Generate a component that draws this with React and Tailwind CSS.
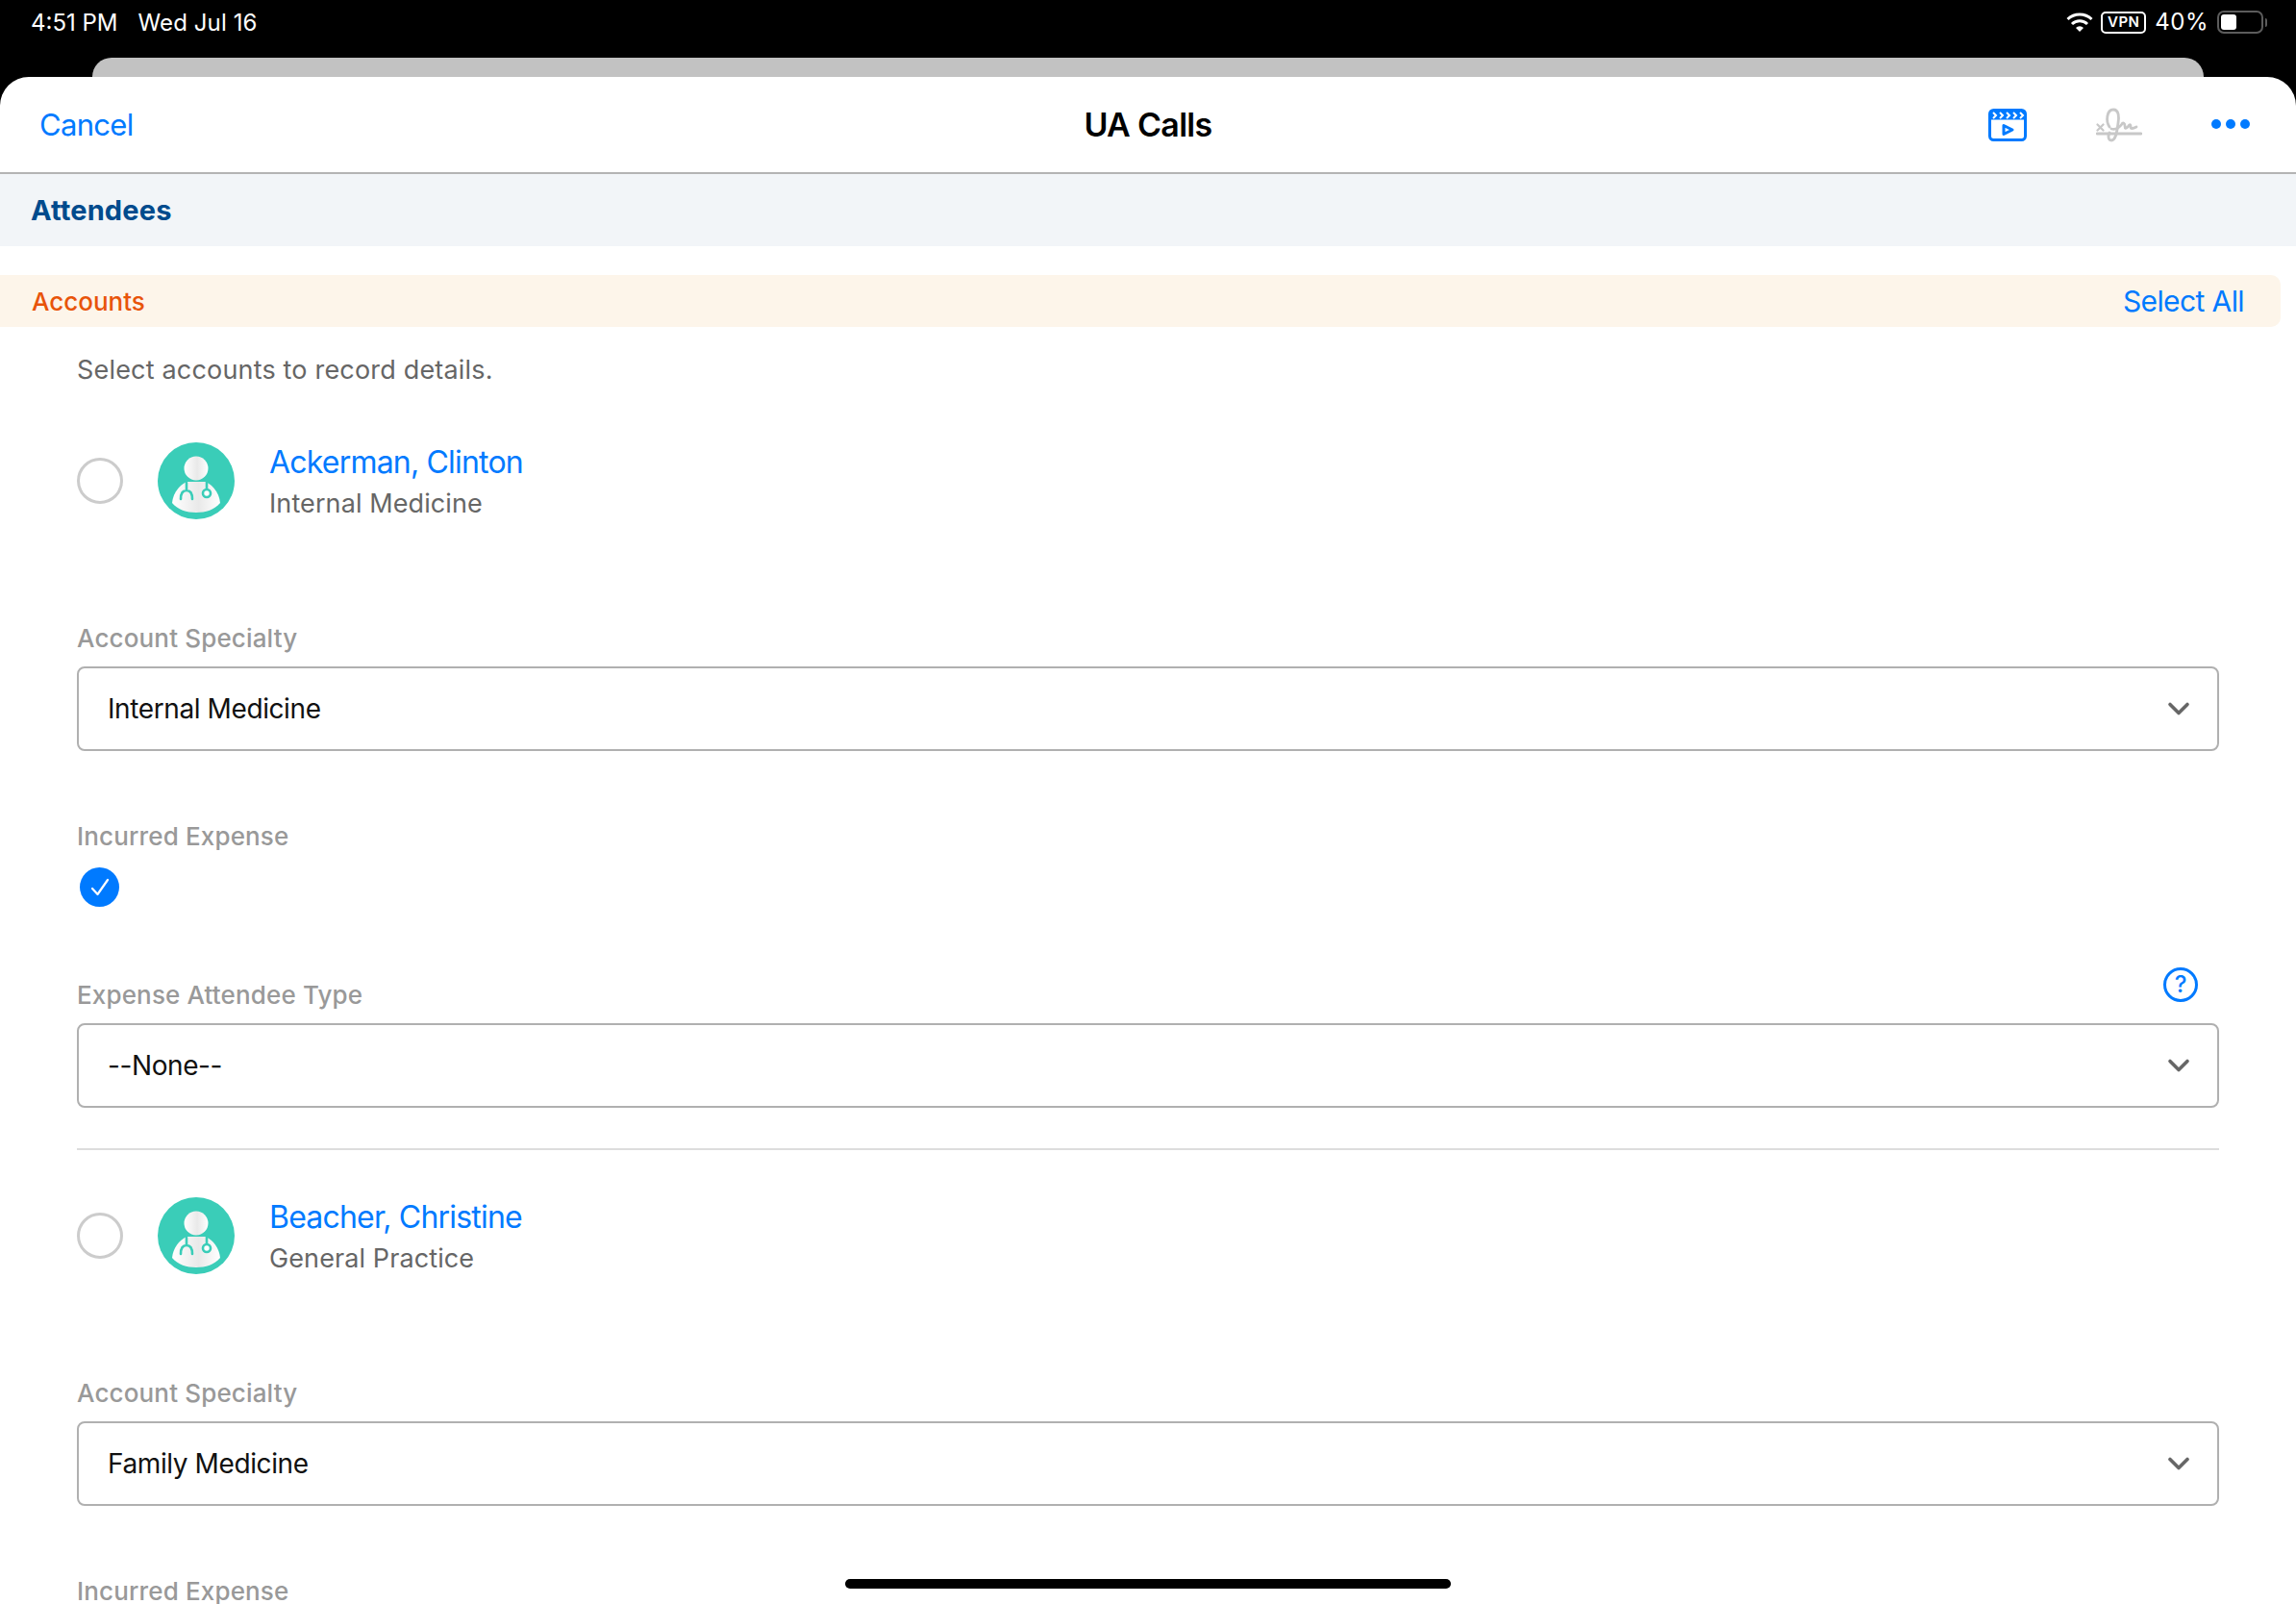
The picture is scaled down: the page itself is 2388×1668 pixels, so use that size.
import { ChevronDown } from "lucide-react";

const font = { fontFamily: "Inter, 'Noto Sans', sans-serif" };

function Avatar() {
  return (
    <svg width="80" height="80" viewBox="0 0 80 80" className="shrink-0">
      <defs>
        <linearGradient id="doc" x1="0" x2="1" y1="0" y2="0">
          <stop offset="0" stopColor="#ffffff" />
          <stop offset="0.55" stopColor="#e9e9e9" />
          <stop offset="1" stopColor="#ffffff" />
        </linearGradient>
      </defs>
      <circle cx="40" cy="40" r="40" fill="#3acdb8" />
      <circle cx="40" cy="27" r="12.500" fill="url(#doc)" />
      <path d="M15 63c1-10 7-18 15-22h20c8 4 14 12 15 22-6 7-15 10-25 10s-19-3-25-10z" fill="url(#doc)" />
      <path d="M30 42v8c-4 0-6 3-6 9M30 50c4 0 6 3 6 9" fill="none" stroke="#3acdb8" strokeWidth="2.600" strokeLinecap="round" />
      <path d="M51 41v8" fill="none" stroke="#3acdb8" strokeWidth="2.600" />
      <circle cx="51" cy="53" r="4" fill="#ffffff" stroke="#3acdb8" strokeWidth="2.600" />
    </svg>
  );
}

function Radio() {
  return <div className="w-[48px] h-[48px] rounded-full border-[3px] border-[#cccccc] shrink-0" />;
}

function AccountRow({ name, specialty }) {
  return (
    <div className="flex items-center h-[80px]">
      <Radio />
      <div className="ml-[36px]">
        <Avatar />
      </div>
      <div className="ml-[36px] mt-[1px]">
        <div className="text-[32px] leading-[40px] text-[#007aff] tracking-[-0.8px]">{name}</div>
        <div className="text-[27px] leading-[34px] mt-[6px] text-[#666666] tracking-[0.1px]">{specialty}</div>
      </div>
    </div>
  );
}

function Label({ children }) {
  return <div className="text-[26px] leading-[32px] font-medium text-[#999999] tracking-[0.15px]">{children}</div>;
}

function Select({ value }) {
  return (
    <div className="h-[88px] rounded-[8px] border-2 border-[#b0b0b0] flex items-center justify-between pl-[30px] pr-[22px]">
      <span className="text-[28px] text-[#111111] tracking-[-0.4px]">{value}</span>
      <ChevronDown size={36} strokeWidth={2.4} className="text-[#666666]" />
    </div>
  );
}

function VideoIcon() {
  return (
    <svg width="40" height="34" viewBox="0 0 40 34" fill="none" stroke="#007aff">
      <rect x="1.500" y="1.500" width="37" height="31" rx="4" strokeWidth="3" />
      <path d="M2 7h36" strokeWidth="9" />
      <path d="M5 4l3 3-3 3M12 4l3 3-3 3M19 4l3 3-3 3M26 4l3 3-3 3M33 4l3 3-3 3" stroke="#ffffff" strokeWidth="2" />
      <path d="M16 17.500v9l9-4.500z" strokeWidth="3" strokeLinejoin="round" />
    </svg>
  );
}

function SignatureIcon() {
  return (
    <svg width="48" height="36" viewBox="0 0 48 36" fill="none" stroke="#c8c8c8" strokeWidth="2.800" strokeLinecap="round">
      <path d="M1.500 17.500l6 6M7.500 17.500l-6 6" strokeWidth="2.200" />
      <path d="M1 27h46" />
      <path d="M14 20C10 14 11 2 18 2c6 0 6 8 5 14-1 7-2 18-7 18-3 0-4-4-2-8" />
      <path d="M16 22c4 1 8-1 11-5 1-2 3-1 3 2 0 3 1 3 3 1 2-3 3-3 3 0 0 2 2 2 6 0" />
    </svg>
  );
}

function StatusIcons() {
  return (
    <div className="flex items-center">
      <svg width="28" height="22" viewBox="0 0 28 22" fill="none" stroke="#ffffff" strokeWidth="3">
        <path d="M1.500 8a18 18 0 0 1 25 0" />
        <path d="M6 13a11.500 11.500 0 0 1 16 0" />
        <path d="M14 21l-4-4a5.500 5.500 0 0 1 8 0z" fill="#ffffff" stroke="none" />
      </svg>
      <div className="ml-[8px] w-[47px] h-[23px] border-2 border-white rounded-[5px] flex items-center justify-center text-[15px] font-semibold text-white tracking-[0.5px]">
        VPN
      </div>
      <span className="ml-[9px] text-[24px] text-white tracking-[0.5px]">40%</span>
      <div className="ml-[9px] w-[48px] h-[24px] border-2 border-[#5c5c5c] rounded-[7px] p-[2px]">
        <div className="w-[16px] h-full bg-white rounded-[3px]" />
      </div>
      <div className="ml-[2px] w-[2px] h-[9px] bg-[#5c5c5c] rounded-r" />
    </div>
  );
}

export default function App() {
  return (
    <div className="relative w-[2388px] h-[1668px] overflow-hidden bg-black" style={font}>
      {/* status bar */}
      <div className="h-[60px] flex justify-between pl-[32px] pr-[30px] pt-[7px] text-white text-[24px]">
        <div className="flex gap-[21px] h-[34px] items-center">
          <span>4:51 PM</span>
          <span className="tracking-[0.1px]">Wed Jul 16</span>
        </div>
        <div className="h-[34px] flex items-center -mt-[1px]">
          <StatusIcons />
        </div>
      </div>
      <div className="h-[20px] mx-[96px] bg-[#c2c2c2] rounded-t-[22px]" />

      {/* sheet */}
      <div className="bg-white rounded-t-[30px] h-[1588px]">
        <div className="relative h-[101px] border-b-2 border-[#b4b4b4] flex items-center justify-between pl-[41px] pr-[48px]">
          <span className="text-[31px] text-[#007aff] tracking-[-0.7px] mt-[2px]">Cancel</span>
          <span className="text-[34px] font-semibold text-black absolute left-0 right-0 text-center tracking-[-0.7px]">UA Calls</span>
          <div className="flex items-center relative">
            <VideoIcon />
            <div className="ml-[72px]"><SignatureIcon /></div>
            <div className="ml-[72px] flex gap-[5px] -mt-[1px]">
              <div className="w-[10px] h-[10px] rounded-full bg-[#007aff]" />
              <div className="w-[10px] h-[10px] rounded-full bg-[#007aff]" />
              <div className="w-[10px] h-[10px] rounded-full bg-[#007aff]" />
            </div>
          </div>
        </div>

        <div className="h-[75px] bg-[#f2f5f8] flex items-center pl-[32px] text-[29px] font-bold text-[#004b8d] tracking-[0.15px]">
          Attendees
        </div>

        <div className="mt-[30px] mr-[16px] h-[54px] bg-[#fdf5ea] rounded-r-[10px] flex items-center justify-between pl-[33px] pr-[38px]">
          <span className="text-[26px] font-medium text-[#e8540a]">Accounts</span>
          <span className="text-[30px] text-[#007aff] tracking-[-0.6px]">Select All</span>
        </div>

        <div className="px-[80px]">
          <div className="mt-[28px] text-[27px] leading-[34px] text-[#666666] tracking-[0.18px]">Select accounts to record details.</div>

          <div className="mt-[58px]">
            <AccountRow name="Ackerman, Clinton" specialty="Internal Medicine" />
          </div>

          <div className="mt-[108px]"><Label>Account Specialty</Label></div>
          <div className="mt-[13px]"><Select value="Internal Medicine" /></div>

          <div className="mt-[73px]"><Label>Incurred Expense</Label></div>
          <div className="mt-[16px] ml-[3px] w-[41px] h-[41px] rounded-full bg-[#007aff] flex items-center justify-center">
            <svg width="24" height="24" viewBox="0 0 24 24" fill="none" stroke="#ffffff" strokeWidth="2.200" strokeLinecap="round" strokeLinejoin="round">
              <path d="M4 13l5.500 6L20 4" />
            </svg>
          </div>

          <div className="mt-[76px] relative">
            <Label>Expense Attendee Type</Label>
            <div className="absolute right-[22px] -top-[13px] w-[36px] h-[36px] rounded-full border-[3px] border-[#007aff] flex items-center justify-center text-[24px] font-medium text-[#007aff]">
              ?
            </div>
          </div>
          <div className="mt-[13px]"><Select value="--None--" /></div>

          <div className="mt-[42px] border-t-2 border-[#dddddd]" />

          <div className="mt-[49px]">
            <AccountRow name="Beacher, Christine" specialty="General Practice" />
          </div>

          <div className="mt-[108px]"><Label>Account Specialty</Label></div>
          <div className="mt-[13px]"><Select value="Family Medicine" /></div>

          <div className="mt-[73px]"><Label>Incurred Expense</Label></div>
        </div>
      </div>

      {/* home indicator */}
      <div className="absolute left-[879px] top-[1642px] w-[630px] h-[10px] rounded-full bg-black" />
    </div>
  );
}
